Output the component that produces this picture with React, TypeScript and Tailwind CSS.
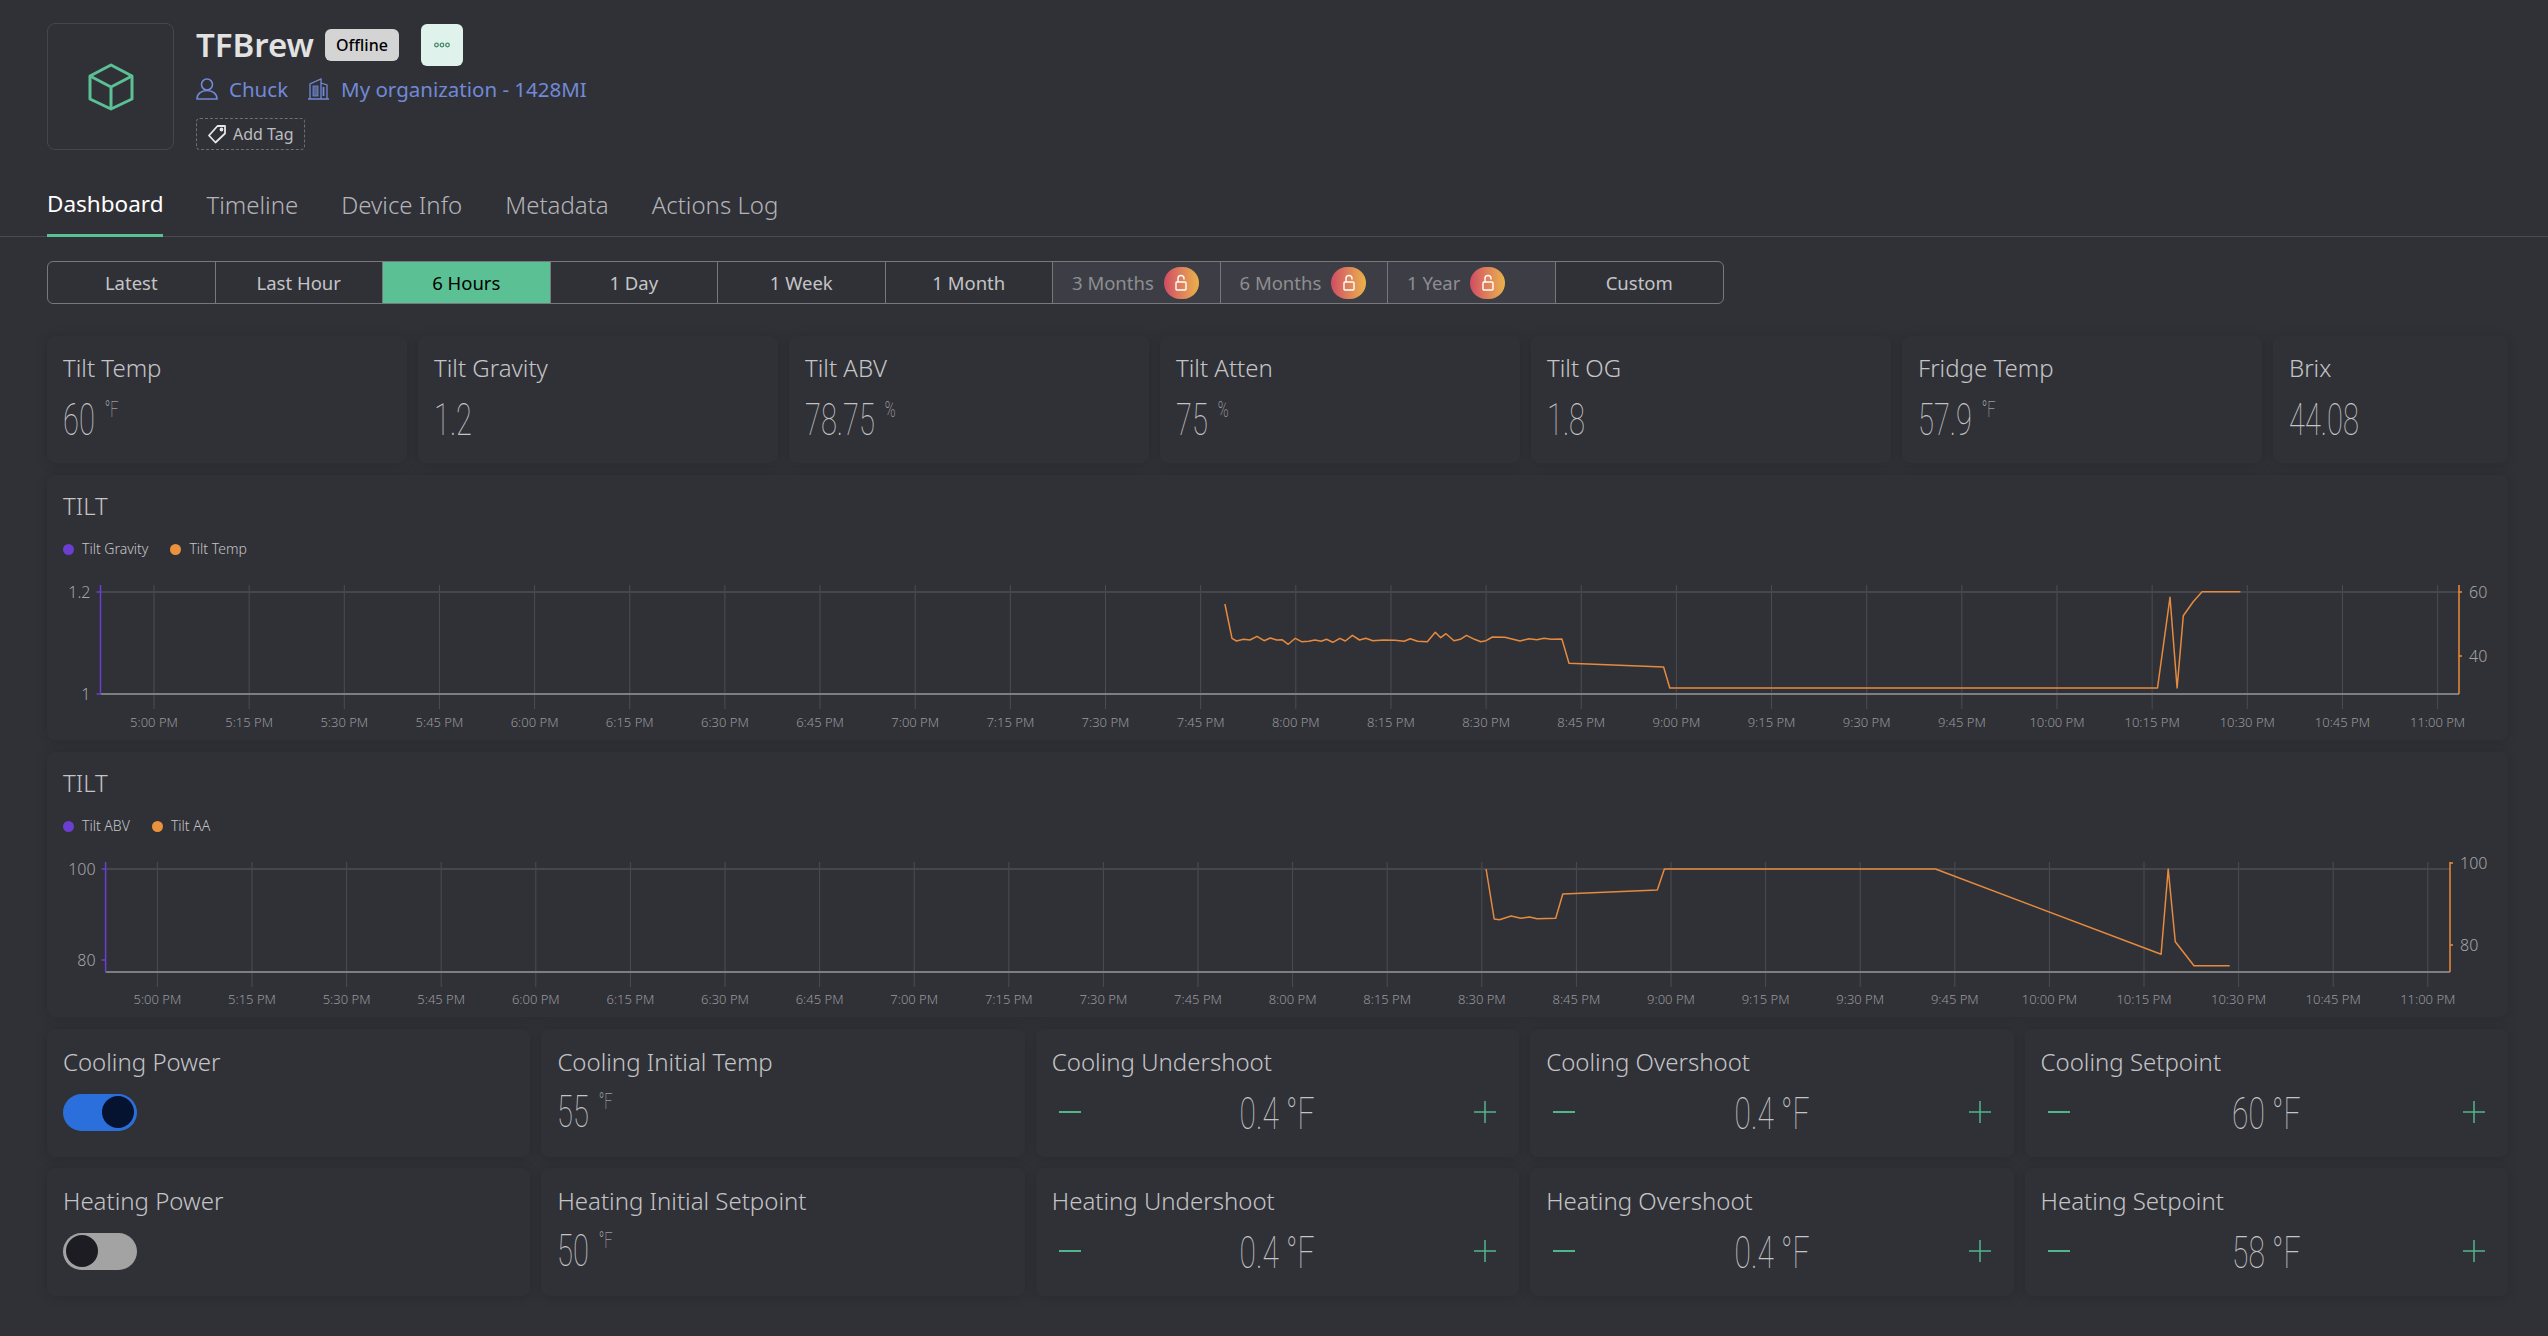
const font = "font-['Noto_Sans',sans-serif]";

const ranges = ["Latest", "Last Hour", "6 Hours", "1 Day", "1 Week", "1 Month", "3 Months", "6 Months", "1 Year", "Custom"];
const tabs = ["Dashboard", "Timeline", "Device Info", "Metadata", "Actions Log"];
const stats = [
  { label: "Tilt Temp", value: "60", unit: "°F" },
  { label: "Tilt Gravity", value: "1.2" },
  { label: "Tilt ABV", value: "78.75", unit: "%" },
  { label: "Tilt Atten", value: "75", unit: "%" },
  { label: "Tilt OG", value: "1.8" },
  { label: "Fridge Temp", value: "57.9", unit: "°F" },
  { label: "Brix", value: "44.08" },
];
const times = ["5:00 PM", "5:15 PM", "5:30 PM", "5:45 PM", "6:00 PM", "6:15 PM", "6:30 PM", "6:45 PM", "7:00 PM", "7:15 PM", "7:30 PM", "7:45 PM", "8:00 PM", "8:15 PM", "8:30 PM", "8:45 PM", "9:00 PM", "9:15 PM", "9:30 PM", "9:45 PM", "10:00 PM", "10:15 PM", "10:30 PM", "10:45 PM", "11:00 PM"];

const cardClass = "rounded-lg bg-[#303137] shadow-[0_1px_12px_rgba(0,0,0,0.15)]";

// points were read off the crops, so map them back to page pixels
const line1 = [[84,132],[92,235],[97,243],[105,238],[112,240],[120,229],[128,242],[135,234],[142,240],[148,239],[155,253],[163,235],[170,245],[178,244],[185,240],[192,244],[198,238],[205,247],[213,235],[219,243],[227,226],[235,240],[242,235],[250,242],[262,240],[275,241],[285,244],[292,236],[300,244],[311,245],[320,217],[326,233],[332,221],[341,242],[348,238],[355,226],[364,238],[371,245],[377,242],[384,231],[398,232],[407,238],[415,243],[425,236],[434,239],[442,235],[450,238],[462,237],[470,310],[576,321],[583,384],[1130,384],[1144,112],[1152,384],[1159,167],[1170,125],[1180,95],[1223,95]]
  .map(([x, y]) => `${(1150 + x / 1.1216).toFixed(1)},${(560 + y / 3).toFixed(1)}`).join(" ");
const line2 = [[377,357],[386,507],[392,509],[405,498],[416,505],[426,501],[434,506],[455,505],[463,432],[569,420],[577,357],[881,357],[1134,613],[1142,357],[1150,575],[1171,647],[1211,647]]
  .map(([x, y]) => `${(1150 + x / 1.1216).toFixed(1)},${(750 + y / 3).toFixed(1)}`).join(" ");

function LockBadge() {
  return (
    <span className="flex h-8 w-[35px] items-center justify-center rounded-full bg-gradient-to-r from-[#d04a62] to-[#e9b248]">
      <svg width="14" height="18" viewBox="0 0 14 18" fill="none" stroke="white" strokeWidth="1.4">
        <rect x="2" y="8" width="10" height="8" rx="1" />
        <path d="M4 8V4.500a3 3 0 0 1 6 0V5.500" />
      </svg>
    </span>
  );
}

function Value({ value, unit }: { value: string; unit?: string }) {
  return (
    <div className="flex h-[44px] origin-left scale-x-[.66] items-start font-['Roboto',sans-serif] font-thin text-[#c4c4c6]">
      <span className="text-[44px] leading-[44px]">{value}</span>
      {unit && <span className="ml-[15px] text-[22px] leading-[24px]">{unit}</span>}
    </div>
  );
}

function StatCard({ label, value, unit, last }: { label: string; value: string; unit?: string; last?: boolean }) {
  return (
    <div className={`${cardClass} h-[127px] px-4 pt-[17px] ${last ? "flex-1" : "w-[360px]"}`}>
      <div className="text-[24px] leading-[30px] font-light text-[#c4c4c6]">{label}</div>
      <div className="mt-[15px]">
        <Value value={value} unit={unit} />
      </div>
    </div>
  );
}

function Toggle({ on }: { on: boolean }) {
  return (
    <div className={`flex h-[37px] w-[74px] items-center rounded-full px-[3px] ${on ? "justify-end bg-[#2a6fdb]" : "justify-start bg-[#a3a3a3]"}`}>
      <div className={`h-[32px] w-[32px] rounded-full ${on ? "bg-[#051330]" : "bg-[#1c1c22]"}`} />
    </div>
  );
}

function ControlCard({ label, children }: { label: string; children: React.ReactNode }) {
  return (
    <div className={`${cardClass} h-[128px] px-4 pt-[18px]`}>
      <div className="text-[24px] leading-[30px] font-light text-[#c4c4c6]">{label}</div>
      <div className="mt-[15px] flex h-[40px] items-center">{children}</div>
    </div>
  );
}

function Stepper({ value }: { value: string }) {
  return (
    <div className="flex w-full items-center justify-between pl-[7px] pr-[7px]">
      <div className="h-[2px] w-[22px] bg-[#4fb68c]" />
      <div className="origin-center scale-x-[.68] pt-[3px] font-['Roboto',sans-serif] text-[44px] leading-[44px] font-thin text-[#c4c4c6]">{value}</div>
      <svg width="22" height="22" viewBox="0 0 22 22" stroke="#4fb68c" strokeWidth="1.5">
        <path d="M0 11h22M11 0v22" />
      </svg>
    </div>
  );
}

type ChartProps = {
  top: number;
  firstX: number;
  step: number;
  leftX: number;
  rightX: number;
  axisTop: number;
  baseY: number;
  gridBottom: number;
  labelY: number;
  left: [string, number][];
  right: [string, number, number][];
  points: string;
};

function Chart({ top, firstX, step, leftX, rightX, axisTop, baseY, gridBottom, labelY, left, right, points }: ChartProps) {
  return (
    <svg viewBox={`47 ${top} 2461 165`} className="block h-[165px] w-full" fontFamily="'Noto Sans', sans-serif" fontWeight="300">
      {times.map((t, i) => (
        <g key={t}>
          <line x1={firstX + i * step} x2={firstX + i * step} y1={axisTop} y2={gridBottom} stroke="#4c4d53" />
          <text x={firstX + i * step} y={labelY + 4} textAnchor="middle" fontSize="13" fill="#98989c">{t}</text>
        </g>
      ))}
      {left.slice(0, -1).map(([, y]) => (
        <line key={y} x1={leftX} x2={rightX} y1={y} y2={y} stroke="#46474d" strokeWidth="2" />
      ))}
      <line x1={leftX} x2={rightX} y1={baseY} y2={baseY} stroke="#7d7e82" strokeWidth="2" />
      <line x1={leftX} x2={leftX} y1={axisTop} y2={baseY} stroke="#6a3ed0" strokeWidth="1.5" />
      <line x1={rightX} x2={rightX} y1={axisTop} y2={baseY} stroke="#ea8b3a" strokeWidth="1.5" />
      {left.map(([label, y]) => (
        <g key={label}>
          <line x1={leftX - 4} x2={leftX} y1={y} y2={y} stroke="#6a3ed0" strokeWidth="1.5" />
          <text x={leftX - 10} y={y + 6} textAnchor="end" fontSize="16" fill="#a4a4a8">{label}</text>
        </g>
      ))}
      {right.map(([label, x, y]) => (
        <g key={label}>
          <line x1={rightX} x2={rightX + 3} y1={y} y2={y} stroke="#ea8b3a" strokeWidth="1.5" />
          <text x={x} y={y + 6} fontSize="16" fill="#a4a4a8">{label}</text>
        </g>
      ))}
      <polyline points={points} fill="none" stroke="#e58a3e" strokeWidth="1.5" strokeLinejoin="round" />
    </svg>
  );
}

function ChartCard({ legend, ...chart }: ChartProps & { legend: string[] }) {
  return (
    <div className={`${cardClass} h-[265px]`}>
      <div className="h-[100px] px-4 pt-[16px]">
        <div className="text-[24px] leading-[30px] font-light text-[#c4c4c6]">TILT</div>
        <div className="mt-[19px] flex items-center gap-[22px] text-[14px] leading-[18px] font-light text-[#c4c4c6]">
          {legend.map((name, i) => (
            <div key={name} className="flex items-center gap-[8px]">
              <span className={`h-[11px] w-[11px] rounded-full ${i === 0 ? "bg-[#6a3ed0]" : "bg-[#ea933c]"}`} />
              {name}
            </div>
          ))}
        </div>
      </div>
      <Chart {...chart} />
    </div>
  );
}

export default function App() {
  return (
    <div className={`${font} min-h-[1336px] w-full overflow-hidden bg-[#303137] text-[#c4c4c6]`}>
      <header className="flex gap-[22px] pl-[47px] pt-[23px]">
        <div className="flex h-[127px] w-[127px] items-center justify-center rounded-lg border border-[#45464c]">
          <svg width="46" height="48" viewBox="0 0 46 48" fill="none" stroke="#5bc194" strokeWidth="3" strokeLinejoin="round">
            <path d="M23 2l21 11v23L23 46 2 36V13z" />
            <path d="M2 13l21 11 21-11M23 24v22" />
          </svg>
        </div>
        <div>
          <div className="flex h-[44px] items-center">
            <h1 className="text-[33px] leading-[44px] font-semibold text-[#e2e2e2]">TFBrew</h1>
            <span className="ml-[11px] flex h-[32px] w-[74px] items-center justify-center rounded-md bg-[#d4d4d4] text-[16px] font-medium text-black">Offline</span>
            <button className="ml-[22px] flex h-[42px] w-[42px] items-center justify-center rounded-md bg-[#e0f2ec]">
              <svg width="16" height="6" viewBox="0 0 16 6" fill="none" stroke="#4a8a6f" strokeWidth="1.3">
                <circle cx="2.500" cy="3" r="1.800" />
                <circle cx="8" cy="3" r="1.800" />
                <circle cx="13.500" cy="3" r="1.800" />
              </svg>
            </button>
          </div>
          <div className="flex h-[44px] items-center text-[20.5px] text-[#7189d6]">
            <svg width="22" height="22" viewBox="0 0 22 22" fill="none" stroke="#7189d6" strokeWidth="1.6">
              <ellipse cx="11" cy="6.500" rx="5.500" ry="5.500" />
              <path d="M1 21c0-5 4-8.500 10-8.500S21 16 21 21z" />
            </svg>
            <span className="ml-[11px]">Chuck</span>
            <svg className="ml-[20px]" width="21" height="22" viewBox="0 0 21 22" fill="none" stroke="#7189d6" strokeWidth="1.3">
              <path d="M2 21V6l11-5v20M13 5l6 2v14M0 21h21" />
              <rect x="5" y="8" width="5" height="10" fill="#7189d6" fillOpacity="0.6" strokeWidth="0.8" />
              <path d="M15.500 9v9" strokeWidth="1.800" />
            </svg>
            <span className="ml-[12px]">My organization - 1428MI</span>
          </div>
          <div className="mt-[7px] flex h-[32px] w-[109px] items-center gap-[6px] rounded-[4px] border border-dashed border-[#6e6f74] pl-[10px] text-[16px] text-[#bdbdc0]">
            <svg width="20" height="20" viewBox="0 0 20 20" fill="none" stroke="#e6e6e6" strokeWidth="1.8" strokeLinejoin="round">
              <path d="M10.500 2H18v7.500L8.500 18.500 2 11.500z" />
              <circle cx="14.500" cy="5.500" r="1" fill="#e6e6e6" />
            </svg>
            Add Tag
          </div>
        </div>
      </header>

      <nav className="mt-[24px] flex h-[63px] gap-[43px] border-b border-[#4a4b50] pl-[47px]">
        {tabs.map((tab, i) => (
          <div key={tab} className={`-mb-px flex items-center pb-[1px] ${i === 0 ? "border-b-[3px] border-[#5bc194] text-[22.5px] font-normal text-white" : "text-[24px] font-light text-[#b4b4b7]"}`}>
            {tab}
          </div>
        ))}
      </nav>

      <div className="pl-[47px] pt-[24px] pr-[40px]">
        <div className="grid h-[43px] w-[1677px] grid-cols-10 overflow-hidden rounded-md border border-[#77787c]">
          {ranges.map((r, i) => {
            const active = i === 2;
            const locked = i >= 6 && i <= 8;
            return (
              <div
                key={r}
                className={`flex items-center text-[18.5px] ${i < 9 ? "border-r border-[#77787c]" : ""} ${active ? "justify-center bg-[#5bc194] text-black" : locked ? "gap-[10px] bg-[#3d3e45] pl-[19px] text-[#8d8e92]" : "justify-center text-[#c4c4c6]"}`}
              >
                {r}
                {locked && <LockBadge />}
              </div>
            );
          })}
        </div>

        <div className="mt-[32px] flex gap-[11px]">
          {stats.map((s, i) => (
            <StatCard key={s.label} label={s.label} value={s.value} unit={s.unit} last={i === stats.length - 1} />
          ))}
        </div>

        <div className="mt-[12px]">
          <ChartCard
            legend={["Tilt Gravity", "Tilt Temp"]}
            top={575}
            firstX={154}
            step={95.15}
            leftX={100.5}
            rightX={2459}
            axisTop={585}
            baseY={694}
            gridBottom={709}
            labelY={723}
            left={[["1.2", 592], ["1", 694]]}
            right={[["60", 2469, 592], ["40", 2469, 656]]}
            points={line1}
          />
        </div>
        <div className="mt-[12px]">
          <ChartCard
            legend={["Tilt ABV", "Tilt AA"]}
            top={852}
            firstX={157.4}
            step={94.6}
            leftX={105.6}
            rightX={2450}
            axisTop={862}
            baseY={972}
            gridBottom={987}
            labelY={1000}
            left={[["100", 869], ["80", 960]]}
            right={[["100", 2460, 863], ["80", 2460, 945]]}
            points={line2}
          />
        </div>

        <div className="mt-[12px] grid grid-cols-5 gap-[11px]">
          <ControlCard label="Cooling Power"><Toggle on /></ControlCard>
          <ControlCard label="Cooling Initial Temp"><Value value="55" unit="°F" /></ControlCard>
          <ControlCard label="Cooling Undershoot"><Stepper value="0.4 °F" /></ControlCard>
          <ControlCard label="Cooling Overshoot"><Stepper value="0.4 °F" /></ControlCard>
          <ControlCard label="Cooling Setpoint"><Stepper value="60 °F" /></ControlCard>
          <ControlCard label="Heating Power"><Toggle on={false} /></ControlCard>
          <ControlCard label="Heating Initial Setpoint"><Value value="50" unit="°F" /></ControlCard>
          <ControlCard label="Heating Undershoot"><Stepper value="0.4 °F" /></ControlCard>
          <ControlCard label="Heating Overshoot"><Stepper value="0.4 °F" /></ControlCard>
          <ControlCard label="Heating Setpoint"><Stepper value="58 °F" /></ControlCard>
        </div>
      </div>
    </div>
  );
}
